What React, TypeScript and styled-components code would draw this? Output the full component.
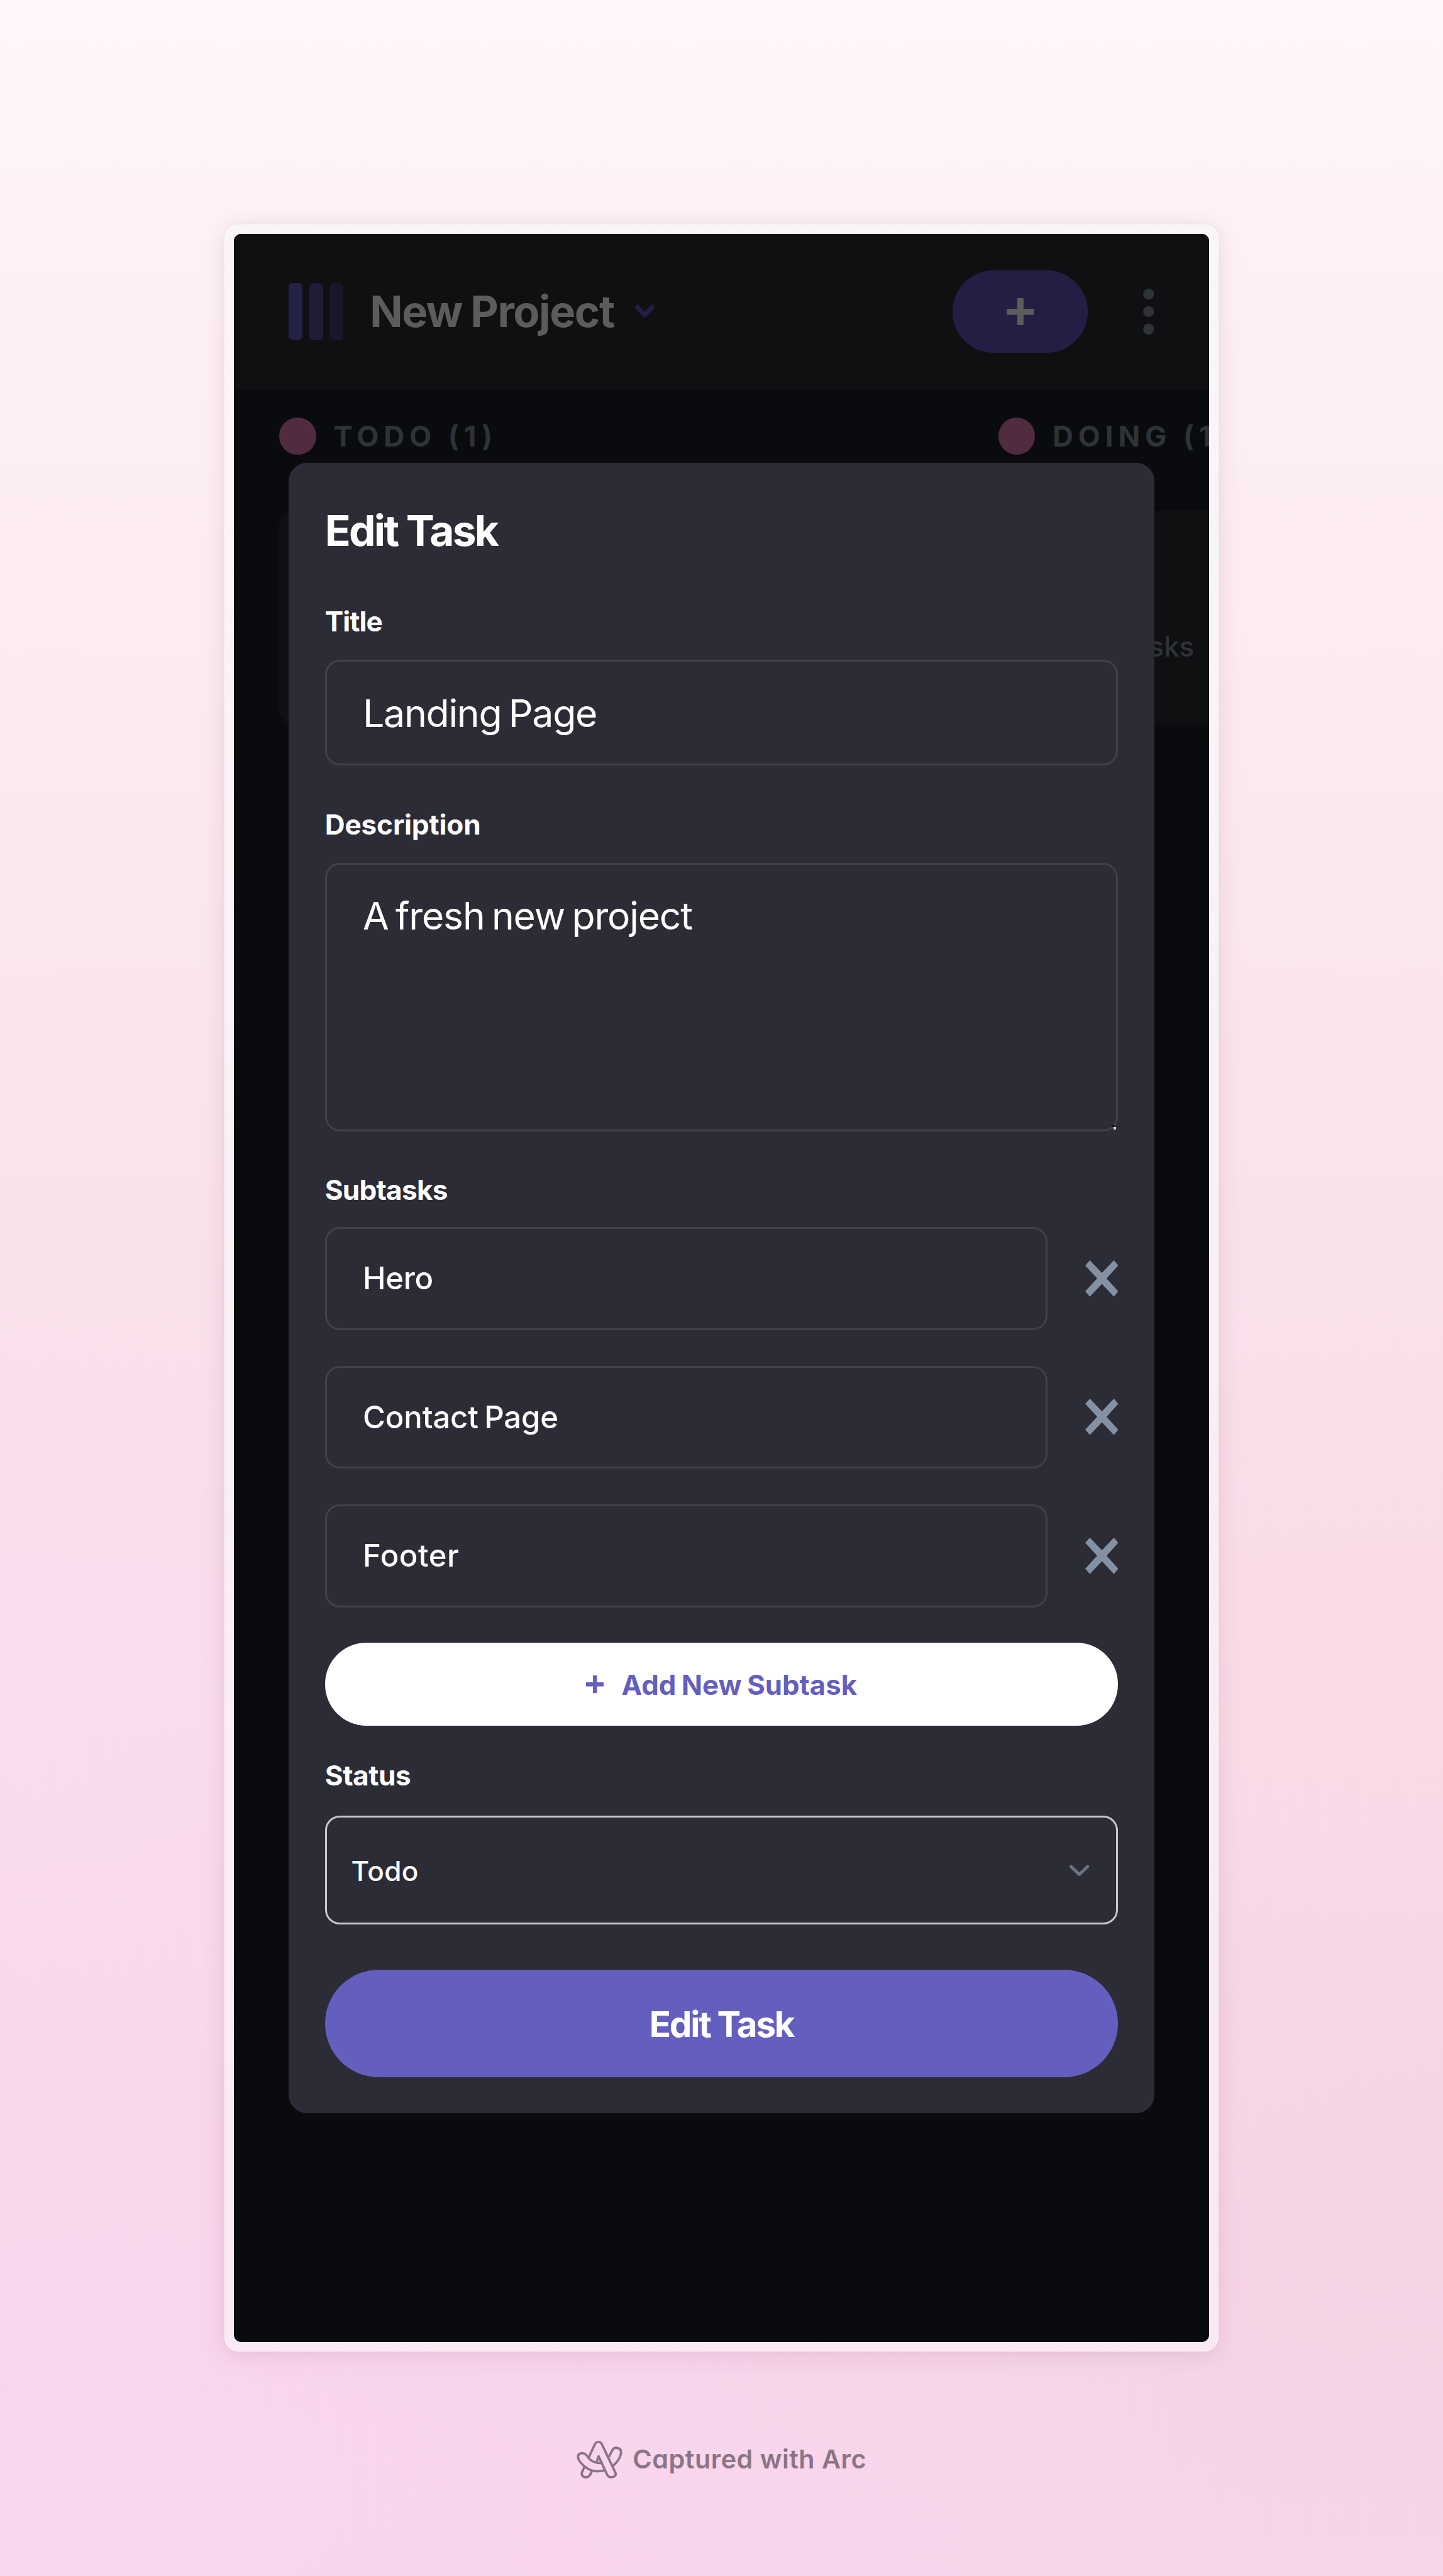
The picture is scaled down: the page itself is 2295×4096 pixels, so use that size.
import React from 'react';
import styled, { createGlobalStyle, css } from 'styled-components';

/* 1rem is one 236th of the viewport width, so the whole page scales with it. */
const GlobalStyle = createGlobalStyle`
  html { font-size: calc(100vw / 236); }
  body { margin: 0; overflow: hidden; }
  *, *::before, *::after { box-sizing: border-box; }
`;

const color = {
  header: '#101012',
  board: '#0a0b0f',
  modal: '#2c2c36',
  line: '#40414d',
  select: '#c6c6d0',
  accent: '#645fbf',
  dimAccent: '#231f44',
  dimText: '#5c5c5c',
  dimMuted: '#2e3338',
  pink: '#512c40',
  cross: '#8491a5',
  credit: '#8b7485',
};

type TypeProps = { $size: number; $weight?: number; $track?: number; $word?: number };

const Text = styled.span<TypeProps>`
  font-size: ${p => p.$size / 10}rem;
  font-weight: ${p => p.$weight ?? 700};
  letter-spacing: ${p => (p.$track ?? 0) / 10}rem;
  word-spacing: ${p => (p.$word ?? 0) / 10}rem;
  line-height: 1;
  white-space: pre;
`;

const Page = styled.main`
  width: 100vw;
  height: 421.2rem;
  display: flex;
  flex-direction: column;
  align-items: center;
  padding-top: 36.7rem;
  overflow: hidden;
  font-family: Inter, 'Liberation Sans', sans-serif;
  background:
    radial-gradient(ellipse 50% 16% at 0% 67%, rgba(251, 221, 243, 0.7), rgba(251, 221, 243, 0)),
    radial-gradient(ellipse 80% 26% at 8% 98%, rgba(250, 214, 241, 0.8), rgba(250, 214, 241, 0)),
    radial-gradient(ellipse 60% 14% at 100% 65%, rgba(250, 220, 230, 0.75), rgba(250, 220, 230, 0)),
    radial-gradient(ellipse 55% 18% at 100% 85%, rgba(245, 211, 228, 0.75), rgba(245, 211, 228, 0)),
    linear-gradient(180deg, #fff7fb 0%, #fef2f6 8%, #fdeef3 18%, #fbe7ef 35%, #f9dfea 56%, #f8d8e9 75%, #f7d5ea 100%);
`;

const Frame = styled.section`
  width: 162.6rem;
  height: 347.8rem;
  flex: none;
  padding: 1.5rem;
  border: 0.2rem solid rgba(255, 255, 255, 0.7);
  border-radius: 2.3rem;
  background: linear-gradient(180deg, rgba(247, 247, 249, 0.7), rgba(251, 251, 252, 0.5));
  box-shadow: 0 0.6rem 4rem rgba(110, 50, 85, 0.13), 0 0 1rem rgba(110, 50, 85, 0.04);
`;

const Screen = styled.div`
  position: relative;
  height: 100%;
  overflow: hidden;
  border-radius: 1.2rem;
  background: ${color.board};
`;

const Header = styled.header`
  height: 25.3rem;
  display: flex;
  align-items: center;
  padding: 0 9rem 0 8.94rem;
  background: ${color.header};
`;

const Logo = styled.div`
  display: flex;
  gap: 1.1rem;
  margin-right: 4.3rem;
`;

const LogoBar = styled.i<{ $fill: string }>`
  width: 2.25rem;
  height: 9.3rem;
  border-radius: 0.75rem;
  background: ${p => p.$fill};
`;

const ProjectName = styled(Text)`
  color: ${color.dimText};
  margin-right: 3.2rem;
`;

const Glyph = styled.svg<{ $w: number; $h: number }>`
  display: block;
  flex: none;
  width: ${p => p.$w / 10}rem;
  height: ${p => p.$h / 10}rem;
`;

const pill = css`
  display: flex;
  align-items: center;
  justify-content: center;
  border: 0;
  padding: 0;
  font-family: inherit;
`;

const NewTaskButton = styled.button`
  ${pill}
  width: 22.2rem;
  height: 13.4rem;
  margin: 0 8.95rem 0 auto;
  border-radius: 6.7rem;
  background: ${color.dimAccent};
`;

const Board = styled.div`
  display: flex;
  gap: 6rem;
  padding: 4.7rem 0 0 7.4rem;
`;

const Column = styled.section`
  flex: none;
  width: 111.6rem;
`;

const ColumnTitle = styled.div`
  display: flex;
  align-items: center;
  gap: 2.85rem;
  height: 6rem;
  margin-bottom: 9.15rem;
  color: ${color.dimMuted};
`;

const Dot = styled.i`
  width: 6rem;
  height: 6rem;
  border-radius: 50%;
  background: ${color.pink};
`;

const Card = styled.article`
  height: 34.8rem;
  border-radius: 2.4rem;
  background: ${color.header};
  box-shadow: 0 0.4rem 1rem rgba(16, 16, 18, 0.6);
`;

const CardMeta = styled.div`
  width: 32rem;
  display: flex;
  justify-content: flex-end;
  padding-top: 20.1rem;
  color: ${color.dimMuted};
`;

const Overlay = styled.div`
  position: absolute;
  inset: 0;
  padding: 37.4rem 8.93rem 0;
`;

const Modal = styled.form`
  display: flex;
  flex-direction: column;
  height: 269.8rem;
  padding: 5.9rem 5.9rem 0;
  border-radius: 3rem;
  background: ${color.modal};
  color: #fff;
`;

const ModalTitle = styled.h2`
  display: flex;
  align-items: center;
  height: 10.25rem;
  margin: 0 0 6.8rem;
`;

const Label = styled.label<{ $gap: number }>`
  display: flex;
  align-items: center;
  height: 6rem;
  margin-bottom: ${p => p.$gap / 10}rem;
`;

const box = css`
  display: flex;
  align-items: center;
  border: 0.36rem solid ${color.line};
  border-radius: 2.4rem;
  padding: 0 5.9rem;
`;

const TitleField = styled.div`
  ${box}
  height: 17.2rem;
  padding-top: 0.25rem;
  margin-bottom: 6.7rem;
`;

const DescriptionField = styled.div`
  ${box}
  position: relative;
  align-items: flex-start;
  height: 43.85rem;
  padding-top: 5.25rem;
  margin-bottom: 6.6rem;
`;

const Resizer = styled.i`
  position: absolute;
  right: 0;
  bottom: 0;
  width: 0.4rem;
  height: 0.35rem;
  background: #d8d8dc;
  &::before {
    content: '';
    position: absolute;
    right: 100%;
    bottom: 100%;
    width: 0.4rem;
    height: 0.35rem;
    background: #08080a;
  }
`;

const SubtaskList = styled.div`
  display: flex;
  flex-direction: column;
  gap: 5.85rem;
  margin-bottom: 5.85rem;
`;

const SubtaskRow = styled.div`
  display: flex;
  align-items: center;
  justify-content: space-between;
`;

const SubtaskField = styled.div`
  ${box}
  width: 118.2rem;
  height: 16.82rem;
`;

const AddSubtask = styled.button`
  ${pill}
  gap: 2.9rem;
  height: 13.5rem;
  flex: none;
  margin-bottom: 5.2rem;
  border-radius: 6.75rem;
  background: #fff;
  color: ${color.accent};
`;

const ButtonText = styled(Text)`
  padding-top: 0.3rem;
`;

const StatusSelect = styled.div`
  ${box}
  justify-content: space-between;
  height: 17.8rem;
  padding: 0.3rem 4.4rem 0 4rem;
  border-color: ${color.select};
  margin-bottom: 7.4rem;
`;

const Submit = styled.button`
  ${pill}
  height: 17.63rem;
  flex: none;
  border-radius: 8.82rem;
  background: ${color.accent};
  color: #fff;
`;

const Credit = styled.footer`
  display: flex;
  align-items: center;
  gap: 1.6rem;
  height: 8rem;
  margin-top: 13.6rem;
  color: ${color.credit};
  font-feature-settings: 'cv11';
`;

const PLUS = 'M7.368 12V7.344H12V4.632H7.368V0H4.656v4.632H0v2.712h4.656V12z';

const PlusIcon = ({ size, fill }: { size: number; fill: string }) => (
  <Glyph $w={size} $h={size} viewBox="0 0 12 12">
    <path d={PLUS} fill={fill} />
  </Glyph>
);

const CrossIcon = () => (
  <Glyph $w={54} $h={59.5} viewBox="0 0 158 177" preserveAspectRatio="none">
    <path
      d="M22 0 80 61 137 0 158 25 102 88 158 151 137 177 80 115 22 177 0 151 57 88 0 25Z"
      fill={color.cross}
    />
  </Glyph>
);

const ArcLogo = () => (
  <Glyph $w={76} $h={63} viewBox="28 38 228 189" fill="none" stroke={color.credit} strokeWidth="11.5" strokeLinejoin="round">
    <path d="M88 122 117 60C125 42 145 42 153 60L218 196C226 212 212 220 199 220C188 220 182 216 178 208L136 117 126 146" />
    <path d="M170 184C142 195 105 192 80 176C55 160 36 138 35 121C34 107 47 100 58 102C76 104 79 117 90 129C104 144 125 152 152 150" />
    <path d="M67 168 56 192C48 208 58 220 73 220C84 220 90 216 94 208L105 187" />
    <path d="M187 120 203 88C209 77 220 74 231 77C246 81 248 92 245 106C240 128 228 146 207 163" />
  </Glyph>
);

const labels = {
  title: { text: 'Title', track: -1, gap: 32.6 },
  description: { text: 'Description', track: -0.16, gap: 33.1 },
  subtasks: { text: 'Subtasks', track: -0.8, gap: 30.8 },
  status: { text: 'Status', track: -0.45, gap: 35 },
};

const FieldLabel = ({ name }: { name: keyof typeof labels }) => (
  <Label $gap={labels[name].gap}>
    <Text $size={45.4} $track={labels[name].track}>{labels[name].text}</Text>
  </Label>
);

const subtasks = [
  { text: 'Hero', track: -0.3 },
  { text: 'Contact Page', track: -0.2 },
  { text: 'Footer', track: 0.5 },
];

export default function App() {
  return (
    <Page>
      <GlobalStyle />
      <Frame>
        <Screen>
          <Header>
            <Logo>
              <LogoBar $fill="#242146" />
              <LogoBar $fill="#1f1c39" />
              <LogoBar $fill="#19182b" />
            </Logo>
            <ProjectName $size={70.8} $track={-1.5} $word={-1.5}>New Project</ProjectName>
            <Glyph $w={35.9} $h={25.1} viewBox="0 0 10 7" fill="none">
              <path d="m1 1 4 4 4-4" stroke="#221f48" strokeWidth="2" />
            </Glyph>
            <NewTaskButton type="button">
              <PlusIcon size={45} fill={color.dimText} />
            </NewTaskButton>
            <Glyph $w={18} $h={75} viewBox="0 0 18 75" fill={color.dimMuted}>
              <circle cx="9" cy="8.9" r="8.9" />
              <circle cx="9" cy="37.5" r="8.9" />
              <circle cx="9" cy="66.1" r="8.9" />
            </Glyph>
          </Header>
          <Board>
            <Column>
              <ColumnTitle>
                <Dot />
                <Text $size={47} $track={8}>TODO (1)</Text>
              </ColumnTitle>
              <Card />
            </Column>
            <Column>
              <ColumnTitle>
                <Dot />
                <Text $size={47} $track={8}>DOING (1)</Text>
              </ColumnTitle>
              <Card>
                <CardMeta>
                  <Text $size={45} $weight={500}>3 subtasks</Text>
                </CardMeta>
              </Card>
            </Column>
          </Board>
          <Overlay>
            <Modal>
              <ModalTitle>
                <Text $size={69.5} $track={-2.8}>Edit Task</Text>
              </ModalTitle>
              <FieldLabel name="title" />
              <TitleField>
                <Text $size={62.6} $weight={400} $track={-1.4} $word={-4.4}>Landing Page</Text>
              </TitleField>
              <FieldLabel name="description" />
              <DescriptionField>
                <Text $size={62.3} $weight={400} $track={-1.2} $word={-4.6}>A fresh new project</Text>
                <Resizer />
              </DescriptionField>
              <FieldLabel name="subtasks" />
              <SubtaskList>
                {subtasks.map(s => (
                  <SubtaskRow key={s.text}>
                    <SubtaskField>
                      <Text $size={50.5} $weight={500} $track={s.track} $word={-3.5}>{s.text}</Text>
                    </SubtaskField>
                    <CrossIcon />
                  </SubtaskRow>
                ))}
              </SubtaskList>
              <AddSubtask type="button">
                <PlusIcon size={29.3} fill={color.accent} />
                <ButtonText $size={45} $track={0} $word={-2}>Add New Subtask</ButtonText>
              </AddSubtask>
              <FieldLabel name="status" />
              <StatusSelect>
                <Text $size={45.4} $weight={500} $track={0.35}>Todo</Text>
                <Glyph $w={32} $h={20} viewBox="0 0 32 20" fill="none">
                  <path d="M2.5 3 16 16 29.5 3" stroke="#6e7482" strokeWidth="5" strokeLinecap="round" strokeLinejoin="round" />
                </Glyph>
              </StatusSelect>
              <Submit type="button">
                <ButtonText $size={58.2} $track={-2.4}>Edit Task</ButtonText>
              </Submit>
            </Modal>
          </Overlay>
        </Screen>
      </Frame>
      <Credit>
        <ArcLogo />
        <Text $size={42.6} $weight={600} $track={0.45}>Captured with Arc</Text>
      </Credit>
    </Page>
  );
}
